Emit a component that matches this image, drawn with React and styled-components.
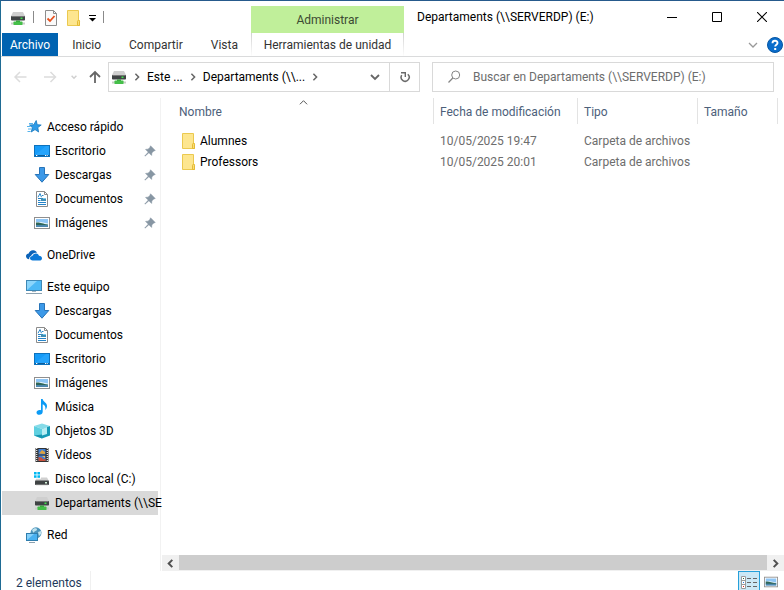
import React from 'react';
import styled, { createGlobalStyle } from 'styled-components';

const GlobalStyle = createGlobalStyle`
  *, *::before, *::after { box-sizing: border-box; }
  html, body { margin: 0; background: #fff; }
  body, button, input {
    font-family: Roboto, "Noto Sans", sans-serif;
    font-size: 12px;
    line-height: 16px;
  }
  button { margin: 0; padding: 0; border: 0; background: none; color: inherit; cursor: default; }
  svg { display: block; flex: none; }
`;

const Window = styled.div`
  display: flex;
  flex-direction: column;
  height: 100vh;
  overflow: hidden;
  background: #fff;
  color: #000;
  border-top: 1px solid #265a8c;
  border-left: 1px solid #1f6b94;
  white-space: nowrap;
`;

const Ribbon = styled.header`
  display: grid;
  grid-template-columns: 250px 153px 1fr;
  grid-template-rows: 32px 23px;
  border-bottom: 1px solid #dadbdc;
`;

const QuickAccess = styled.div`
  display: flex;
  align-items: center;
  gap: 7px;
  padding: 2px 0 0 9px;
`;

const Separator = styled.span`
  width: 1px;
  height: 12px;
  margin: 0 ${(p) => p.$after || 0} 2px 0;
  background: #8a8a8a;
`;

const ContextTitle = styled.div`
  margin-top: 5px;
  display: flex;
  align-items: center;
  justify-content: center;
  background: #c0ef9a;
  color: #3c4a33;
`;

const TitleArea = styled.div`
  display: flex;
  align-items: center;
  justify-content: space-between;
  padding-left: 13px;
`;

const Title = styled.h1`
  margin: 0;
  font-size: 12px;
  font-weight: 400;
`;

const WindowButtons = styled.div`
  display: flex;
`;

const WindowButton = styled.button`
  width: 45px;
  height: 32px;
  display: grid;
  place-items: center;
`;

const Tabs = styled.nav`
  display: flex;
  padding-left: 1px;
`;

const Tab = styled.button`
  padding: 0 ${(p) => (p.$active ? 8 : 14)}px;
  background: ${(p) => (p.$active ? '#0063b1' : 'transparent')};
  color: ${(p) => (p.$active ? '#fff' : '#333')};
`;

const ContextTab = styled.button`
  border: solid;
  border-width: 0 1px;
  border-image: linear-gradient(#cfcfcf, #fff) 1;
  color: #333;
`;

const RibbonTools = styled.div`
  display: flex;
  align-items: center;
  justify-content: flex-end;
  gap: 9px;
  padding-right: 1px;
`;

const AddressRow = styled.div`
  display: grid;
  grid-template-columns: 95px minmax(0, 312fr) minmax(0, 354fr);
  align-items: center;
  height: 41px;
  padding: 0 10px 1px 12px;
`;

const NavButtons = styled.div`
  display: flex;
  align-items: center;
`;

const NavButton = styled.button`
  width: ${(p) => p.$width}px;
  height: 24px;
  display: grid;
  place-items: center start;
`;

const AddressBox = styled.div`
  height: 30px;
  display: flex;
  align-items: center;
  border: 1px solid #d9d9d9;
  padding-left: 2px;
`;

const Crumb = styled.button`
  margin-left: 6px;
`;

const CrumbArrow = styled.span`
  margin-left: 6px;
`;

const DropButton = styled.button`
  width: 28px;
  height: 28px;
  margin-left: auto;
  display: grid;
  place-items: center;
`;

const RefreshButton = styled(DropButton)`
  width: 30px;
  margin-left: 0;
  border-left: 1px solid #d9d9d9;
`;

const SearchBox = styled.label`
  height: 30px;
  margin-left: 12px;
  display: flex;
  align-items: center;
  gap: 12px;
  padding: 0 8px 0 14px;
  border: 1px solid #d9d9d9;
`;

const SearchInput = styled.input`
  flex: 1;
  min-width: 0;
  border: 0;
  padding: 0;
  outline: 0;
  background: transparent;
  &::placeholder { color: #6d6d6d; opacity: 1; }
`;

const Body = styled.div`
  flex: 1;
  min-height: 0;
  display: grid;
  grid-template-columns: 160px 1fr;
`;

const Sidebar = styled.nav`
  padding: 17px 2px 0 1px;
  border-right: 1px solid #f2f2f2;
`;

const Group = styled.ul`
  list-style: none;
  margin: 0 0 8px;
  padding: 0;
`;

const SideItem = styled.button`
  width: 100%;
  height: 24px;
  display: flex;
  align-items: center;
  gap: 5px;
  padding-left: ${(p) => (p.$nested ? 32 : 24)}px;
  background: ${(p) => (p.$selected ? '#d9d9d9' : 'transparent')};
`;

const PinSlot = styled.span`
  margin-left: auto;
  padding-right: 2px;
`;

const Main = styled.main`
  display: flex;
  flex-direction: column;
  min-width: 0;
`;

const FileArea = styled.div`
  flex: 1;
  min-height: 0;
  overflow: hidden;
`;

const FileTable = styled.table`
  width: 100%;
  table-layout: fixed;
  border-collapse: separate;
  border-spacing: 0;
  tbody::before { content: ''; display: block; height: 6px; }
`;

const Col = styled.col`
  width: ${(p) => p.$width};
`;

const HeadCell = styled.th`
  position: relative;
  height: 26px;
  padding: 2px 0 0 ${(p) => (p.$first ? 18 : 6)}px;
  border-right: 1px solid #e3e3e3;
  text-align: left;
  font-weight: 400;
  color: #4c607a;
`;

const SortMark = styled.span`
  position: absolute;
  top: 0;
  left: 0;
  right: 0;
  display: flex;
  justify-content: center;
  padding-left: 12px;
`;

const Cell = styled.td`
  height: 21px;
  padding: 0 6px;
  color: #6d6d6d;
`;

const NameCell = styled(Cell)`
  padding-left: 20px;
  color: #000;
`;

const FileName = styled.span`
  display: flex;
  align-items: center;
  gap: 3px;
`;

const ScrollBar = styled.div`
  display: flex;
  height: 16px;
  margin-left: 1px;
  background: #f0f0f0;
`;

const ScrollButton = styled.button`
  width: 17px;
  display: grid;
  place-items: center;
`;

const ScrollThumb = styled.div`
  flex: 1;
  height: 15px;
  background: #cdcdcd;
`;

const StatusBar = styled.footer`
  display: flex;
  justify-content: space-between;
  align-items: flex-start;
  height: 19px;
  padding-right: 2px;
  overflow: hidden;
`;

const StatusText = styled.span`
  padding: 4px 8px 0 15px;
  border-right: 1px solid #f0f0f0;
  color: #1e395b;
`;

const ViewButtons = styled.div`
  display: flex;
`;

const ViewButton = styled.button`
  width: 22px;
  height: 22px;
  display: grid;
  place-items: center;
  border: 1px solid ${(p) => (p.$active ? '#26a0da' : 'transparent')};
  background: ${(p) => (p.$active ? '#cbe8f6' : 'transparent')};
`;

const Svg = ({ w = 16, h = 16, children }) => (
  <svg width={w} height={h} viewBox={`0 0 ${w} ${h}`} fill="none" aria-hidden="true">{children}</svg>
);

const Chevron = ({ dir = 'right', size = 8, color = '#666', width = 1.5 }) => {
  const s = size;
  const paths = {
    right: `M${s * 0.3} ${s * 0.1}L${s * 0.7} ${s * 0.5}L${s * 0.3} ${s * 0.9}`,
    left: `M${s * 0.7} ${s * 0.1}L${s * 0.3} ${s * 0.5}L${s * 0.7} ${s * 0.9}`,
    down: `M${s * 0.1} ${s * 0.3}L${s * 0.5} ${s * 0.7}L${s * 0.9} ${s * 0.3}`,
    up: `M${s * 0.1} ${s * 0.7}L${s * 0.5} ${s * 0.3}L${s * 0.9} ${s * 0.7}`,
  };
  return <Svg w={s} h={s}><path d={paths[dir]} stroke={color} strokeWidth={width} /></Svg>;
};

const NetDriveIcon = () => (
  <Svg>
    <path d="M3 2h10l2 4H1z" fill="#cfcfcf" />
    <rect x="1" y="6" width="14" height="4.5" rx=".8" fill="#3f4344" />
    <path d="M2 6.500h12" stroke="#777" />
    <rect x="10.500" y="7.500" width="2" height="1.600" fill="#41e04c" />
    <rect x="6" y="10.500" width="4" height="2" fill="#2f9d35" />
    <rect x="1" y="12.500" width="14" height="2" fill="#c9cfc9" />
    <rect x="3.500" y="11.600" width="9" height="3.400" rx=".6" fill="#45bf49" />
  </Svg>
);

const LocalDriveIcon = () => (
  <Svg>
    <g fill="#00b7f1">
      <rect x="0" y="1" width="2.600" height="2.500" /><rect x="3.400" y="1" width="2.600" height="2.500" />
      <rect x="0" y="4.300" width="2.600" height="2.500" /><rect x="3.400" y="4.300" width="2.600" height="2.500" />
    </g>
    <path d="M7 6.500h6l2 3.500H1l1.200-2.300H7z" fill="#d0d0d0" />
    <rect x="1" y="9.500" width="14" height="4.500" rx=".8" fill="#3f4344" />
    <path d="M2 13.700h12" stroke="#8d8d8d" strokeWidth=".8" />
    <rect x="11" y="11" width="2" height="1.500" fill="#d7f5dc" />
  </Svg>
);

const FolderIcon = () => (
  <Svg>
    <path d="M1.500.5h11v10h1v5h-12z" fill="#fde68f" stroke="#ebc94f" />
    <path d="M11.500 15.500v-4.200l1-1.300 1 1.300v4.200z" fill="#f9dc76" stroke="#e5bb33" />
  </Svg>
);

const PropertiesIcon = () => (
  <Svg>
    <path d="M2.500.5h8l3 3v12h-11z" fill="#fafafa" stroke="#8c8c8c" />
    <path d="M10.500.5v3h3" stroke="#8c8c8c" />
    <path d="M4.500 8.500l2.500 2.500 4.500-5" stroke="#e8501d" strokeWidth="1.800" />
  </Svg>
);

const StarIcon = () => (
  <Svg>
    <path d="M10.200 1.500l1 4.200 4 .3-3.400 2.600.8 4.400-3.600-2.400L5.200 13l1.200-4.400L3.500 6l4.300-.3z" fill="#2d9be8" stroke="#1777bd" strokeWidth=".8" />
    <path d="M3 4.500h4M1 7.500h3.500M2 10h3.500M1.500 12.500h3" stroke="#56b4ed" />
  </Svg>
);

const DesktopIcon = () => (
  <Svg>
    <rect x=".5" y="2.500" width="15" height="11" fill="#169bf8" stroke="#0d72bd" />
    <path d="M1 12L12 3h3v9z" fill="#25a4fc" />
    <path d="M1 12.500h14" stroke="#0c5d9b" />
    <path d="M2 12.500h2M11 12.500h3" stroke="#fff" strokeDasharray="1 .7" />
  </Svg>
);

const DownloadIcon = () => (
  <Svg><path d="M5.500.5h5v7h4.300L8 15.200 1.200 7.500h4.300z" fill="#3c99e8" stroke="#2874b8" /></Svg>
);

const DocumentIcon = () => (
  <Svg>
    <path d="M2.500.5h8l3 3v12h-11z" fill="#fff" stroke="#8b8b8b" />
    <path d="M10.500.5v3h3" stroke="#8b8b8b" />
    <path d="M4 6.200L6 2.500l1.500 3.700M8 4.500h1.500M4 7.500h4M4 9.500h2.500M4 11.500h8M4 13.500h8" stroke="#2584c9" />
    <rect x="7" y="7" width="5" height="3" fill="#3d8eb5" />
    <path d="M9 7.500h3" stroke="#79c8f1" />
  </Svg>
);

const PictureIcon = ({ w = 16 }) => (
  <svg width={w} height={w} viewBox="0 0 16 16" fill="none" aria-hidden="true">
    <rect x=".5" y="2.500" width="15" height="11" fill="#fff" stroke="#8f8f8f" />
    <rect x="2" y="4" width="12" height="8" fill="#8ec5f5" />
    <path d="M2 7h5l7 1.500V10H2z" fill="#e4f3fa" />
    <path d="M2 7.500c4-.5 6 1 12 2v.8H2z" fill="#2f6659" />
    <rect x="2" y="10" width="12" height="2" fill="#4c86ad" />
  </svg>
);

const CloudIcon = () => (
  <Svg>
    <path d="M3.200 12.200C1.200 12 0 10.700 0 9.200 0 7.600 1.200 6.600 2.700 6.600 3.200 4.300 5.200 2.900 7.400 3.200c1.600.2 2.900 1.100 3.600 2.600-2.700-.6-5.200.8-5.900 3.100-1.300.3-2.100 1.600-1.900 3.300z" fill="#0a62b8" />
    <path d="M6.700 13.500c-1.500 0-2.700-.9-2.700-2.200 0-1.300 1-2.100 2.400-2.200.5-1.900 2.100-2.900 3.900-2.600 1.400.2 2.300 1.100 2.700 2.300 1.700 0 3 .9 3 2.400 0 1.400-1.100 2.300-2.600 2.300z" fill="#0a78d7" />
  </Svg>
);

const ComputerIcon = () => (
  <Svg>
    <rect x=".5" y="1.500" width="15" height="10" fill="#4cb8f5" stroke="#3f88b5" />
    <path d="M1 11V2h10z" fill="#8bd5fb" />
    <path d="M6 12h4v1H6z" fill="#a9b8c2" />
    <path d="M0 14.500h16" stroke="#8ba1b0" />
  </Svg>
);

const MusicIcon = () => (
  <Svg>
    <path d="M7 0h1.700c.2 2.500 4.300 3.500 4.300 7 0 1.700-.7 3-1.700 4 .7-3-.6-5-2.600-5.700v7.500c0 1.700-1.500 3-3.300 3-1.700 0-2.900-.9-2.900-2.300 0-1.500 1.500-2.600 3.100-2.600.5 0 1 .1 1.400.3z" fill="#0c9bf5" />
  </Svg>
);

const CubeIcon = () => (
  <Svg>
    <path d="M0 3L8 .5 16 3l-8 3z" fill="#86dbe8" />
    <path d="M0 3l8 3v9.500l-8-3z" fill="#5fd0e0" />
    <path d="M8 6l8-3v9.500l-8 3z" fill="#159ab6" />
    <path d="M8 6l5-1.900v6.900L8 12.500z" fill="#b8edf3" />
    <path d="M0 12.500l8-1v4z" fill="#1695b0" />
  </Svg>
);

const VideoIcon = () => (
  <Svg>
    <rect x="1.500" y="1" width="13" height="14" fill="#333" />
    <path d="M2.700 1v14M13.300 1v14" stroke="#f1f1f1" strokeWidth="1.200" strokeDasharray="1 1" />
    <rect x="4.500" y="2" width="7" height="5.500" fill="#3f7fd4" />
    <rect x="4.500" y="8.500" width="7" height="5.500" fill="#3f7fd4" />
    <path d="M5 6.500l3-3.500 3 2v2z" fill="#e0a33f" />
    <path d="M4.500 10l3 .5 2 2 2-1v2.500h-7z" fill="#c9523b" />
    <path d="M8 9h3v2z" fill="#f0bb53" />
  </Svg>
);

const NetworkIcon = () => (
  <Svg>
    <circle cx="10" cy="5.800" r="5.500" fill="#4c94bb" />
    <path d="M6 3c2-2.500 5-2 5-.5S8 4 7.500 6zM12 5l3-1v3l-2 2z" fill="#bfe2ee" />
    <rect x=".5" y="6.500" width="11" height="7" fill="#49b1f1" stroke="#2f7dad" />
    <path d="M1 13V7h7z" fill="#85d0fa" />
    <path d="M3 15.500h6" stroke="#8ba1b0" />
  </Svg>
);

const PinIcon = () => (
  <Svg w={12} h={12}>
    <path d="M6.500.8l4.700 4.700-1.400.4-2 2-.2 2.500L4.900 7.700 1 11.200.8 11l3.500-3.900L1.600 4.400l2.500-.2 2-2z" fill="#8796a3" stroke="#8796a3" strokeWidth=".6" />
  </Svg>
);

const ArrowIcon = ({ d, color, width = 1.5 }) => (
  <Svg w={14} h={14}><path d={d} stroke={color} strokeWidth={width} /></Svg>
);

const RefreshIcon = () => (
  <Svg w={12} h={12}>
    <path d="M8.800 3.200A4 4 0 1 1 2.700 4.200" stroke="#6a6a6a" strokeWidth="1.500" />
    <path d="M2 1.700h4.300v4.300" stroke="#6a6a6a" strokeWidth="1.400" />
  </Svg>
);

const SearchIcon = () => (
  <Svg w={14} h={14}>
    <circle cx="8.700" cy="5" r="4" stroke="#858585" />
    <path d="M5.800 8L1.500 12.500" stroke="#858585" strokeWidth="1.200" />
  </Svg>
);

const HelpIcon = () => (
  <Svg>
    <circle cx="8" cy="8" r="7.500" fill="#0a6dcb" stroke="#0757a4" />
    <path d="M5.500 6.200c0-3.200 5-3.100 5-.2 0 1.700-2.300 1.700-2.300 3.500" stroke="#fff" strokeWidth="1.900" />
    <rect x="7.200" y="11" width="2" height="2" fill="#fff" />
  </Svg>
);

const DetailsIcon = () => (
  <Svg w={18} h={16}>
    <path d="M1.500 2.500h4v12h-4zM1.500 6.500h4M1.500 10.500h4" fill="#fff" stroke="#9a9a9a" />
    <rect x="3" y="4" width="1" height="1" fill="#246b3f" />
    <rect x="3" y="8" width="1" height="1" fill="#2a7de1" />
    <rect x="3" y="12" width="1" height="1" fill="#d22" />
    <path d="M7 4.500h4M13 4.500h4M7 8.500h4M13 8.500h4M7 12.500h4M13 12.500h4" stroke="#666" />
  </Svg>
);

const GROUPS = [
  [
    { label: 'Acceso rápido', icon: StarIcon },
    { label: 'Escritorio', icon: DesktopIcon, nested: true, pinned: true },
    { label: 'Descargas', icon: DownloadIcon, nested: true, pinned: true },
    { label: 'Documentos', icon: DocumentIcon, nested: true, pinned: true },
    { label: 'Imágenes', icon: PictureIcon, nested: true, pinned: true },
  ],
  [{ label: 'OneDrive', icon: CloudIcon }],
  [
    { label: 'Este equipo', icon: ComputerIcon },
    { label: 'Descargas', icon: DownloadIcon, nested: true },
    { label: 'Documentos', icon: DocumentIcon, nested: true },
    { label: 'Escritorio', icon: DesktopIcon, nested: true },
    { label: 'Imágenes', icon: PictureIcon, nested: true },
    { label: 'Música', icon: MusicIcon, nested: true },
    { label: 'Objetos 3D', icon: CubeIcon, nested: true },
    { label: 'Vídeos', icon: VideoIcon, nested: true },
    { label: 'Disco local (C:)', icon: LocalDriveIcon, nested: true },
    { label: 'Departaments (\\\\SE', icon: NetDriveIcon, nested: true, selected: true },
  ],
  [{ label: 'Red', icon: NetworkIcon }],
];

const FILES = [
  { name: 'Alumnes', date: '10/05/2025 19:47', type: 'Carpeta de archivos' },
  { name: 'Professors', date: '10/05/2025 20:01', type: 'Carpeta de archivos' },
];

export default function App() {
  return (
    <>
      <GlobalStyle />
      <Window>
        <Ribbon>
          <QuickAccess>
            <NetDriveIcon />
            <Separator $after="2px" />
            <button aria-label="Propiedades"><PropertiesIcon /></button>
            <button aria-label="Nueva carpeta"><FolderIcon /></button>
            <button aria-label="Personalizar barra">
              <Svg w={7} h={7}><path d="M0 .5h7" stroke="#000" /><path d="M0 3h7L3.500 6.500z" fill="#000" /></Svg>
            </button>
            <Separator />
          </QuickAccess>
          <ContextTitle>Administrar</ContextTitle>
          <TitleArea>
            <Title>Departaments (\\SERVERDP) (E:)</Title>
            <WindowButtons>
              <WindowButton aria-label="Minimizar"><Svg w={10} h={10}><path d="M0 5.500h10" stroke="#000" /></Svg></WindowButton>
              <WindowButton aria-label="Maximizar"><Svg w={10} h={10}><path d="M.5.5h9v9h-9z" stroke="#000" /></Svg></WindowButton>
              <WindowButton aria-label="Cerrar"><Svg w={10} h={10}><path d="M0 0l10 10M10 0L0 10" stroke="#000" strokeWidth="1.100" /></Svg></WindowButton>
            </WindowButtons>
          </TitleArea>
          <Tabs>
            <Tab $active>Archivo</Tab>
            <Tab>Inicio</Tab>
            <Tab>Compartir</Tab>
            <Tab>Vista</Tab>
          </Tabs>
          <ContextTab>Herramientas de unidad</ContextTab>
          <RibbonTools>
            <button aria-label="Minimizar la cinta"><Chevron dir="down" size={10} color="#999" width={1.3} /></button>
            <button aria-label="Ayuda"><HelpIcon /></button>
          </RibbonTools>
        </Ribbon>

        <AddressRow>
          <NavButtons>
            <NavButton $width={30} aria-label="Atrás"><ArrowIcon d="M13.500 7H2M7 2L2 7l5 5" color="#dcdcdc" /></NavButton>
            <NavButton $width={28} aria-label="Adelante"><ArrowIcon d="M1 7h11.500M7.500 2l5 5-5 5" color="#dcdcdc" /></NavButton>
            <NavButton $width={17} aria-label="Ubicaciones recientes"><Chevron dir="down" size={6} color="#d0d0d0" /></NavButton>
            <NavButton $width={16} aria-label="Subir"><ArrowIcon d="M7 13V2M2 7l5-5 5 5" color="#666" width={1.8} /></NavButton>
          </NavButtons>
          <AddressBox>
            <NetDriveIcon />
            <CrumbArrow><Chevron /></CrumbArrow>
            <Crumb>Este ...</Crumb>
            <CrumbArrow><Chevron /></CrumbArrow>
            <Crumb>Departaments (\\...</Crumb>
            <CrumbArrow><Chevron /></CrumbArrow>
            <DropButton aria-label="Ubicaciones anteriores"><Chevron dir="down" size={10} width={1.8} /></DropButton>
            <RefreshButton aria-label="Actualizar"><RefreshIcon /></RefreshButton>
          </AddressBox>
          <SearchBox>
            <SearchIcon />
            <SearchInput aria-label="Buscar" placeholder="Buscar en Departaments (\\SERVERDP) (E:)" />
          </SearchBox>
        </AddressRow>

        <Body>
          <Sidebar>
            {GROUPS.map((items, g) => (
              <Group key={g}>
                {items.map(({ label, icon: Icon, nested, pinned, selected }) => (
                  <li key={label}>
                    <SideItem $nested={nested} $selected={selected}>
                      <Icon />
                      <span>{label}</span>
                      {pinned && <PinSlot><PinIcon /></PinSlot>}
                    </SideItem>
                  </li>
                ))}
              </Group>
            ))}
          </Sidebar>
          <Main>
            <FileArea>
              <FileTable>
                <colgroup>
                  <Col $width="273px" /><Col $width="144px" /><Col $width="120px" /><Col $width="80px" /><Col $width="auto" />
                </colgroup>
                <thead>
                  <tr>
                    <HeadCell $first>
                      Nombre
                      <SortMark><Chevron dir="up" size={9} color="#555" width={1} /></SortMark>
                    </HeadCell>
                    <HeadCell>Fecha de modificación</HeadCell>
                    <HeadCell>Tipo</HeadCell>
                    <HeadCell>Tamaño</HeadCell>
                  </tr>
                </thead>
                <tbody>
                  {FILES.map((f) => (
                    <tr key={f.name}>
                      <NameCell><FileName><FolderIcon />{f.name}</FileName></NameCell>
                      <Cell>{f.date}</Cell>
                      <Cell>{f.type}</Cell>
                      <Cell />
                    </tr>
                  ))}
                </tbody>
              </FileTable>
            </FileArea>
            <ScrollBar>
              <ScrollButton aria-label="Desplazar a la izquierda"><Chevron dir="left" size={9} color="#505050" width={2} /></ScrollButton>
              <ScrollThumb />
              <ScrollButton aria-label="Desplazar a la derecha"><Chevron size={9} color="#505050" width={2} /></ScrollButton>
            </ScrollBar>
          </Main>
        </Body>

        <StatusBar>
          <StatusText>2 elementos</StatusText>
          <ViewButtons>
            <ViewButton $active aria-label="Detalles"><DetailsIcon /></ViewButton>
            <ViewButton aria-label="Iconos grandes"><PictureIcon w={14} /></ViewButton>
          </ViewButtons>
        </StatusBar>
      </Window>
    </>
  );
}
